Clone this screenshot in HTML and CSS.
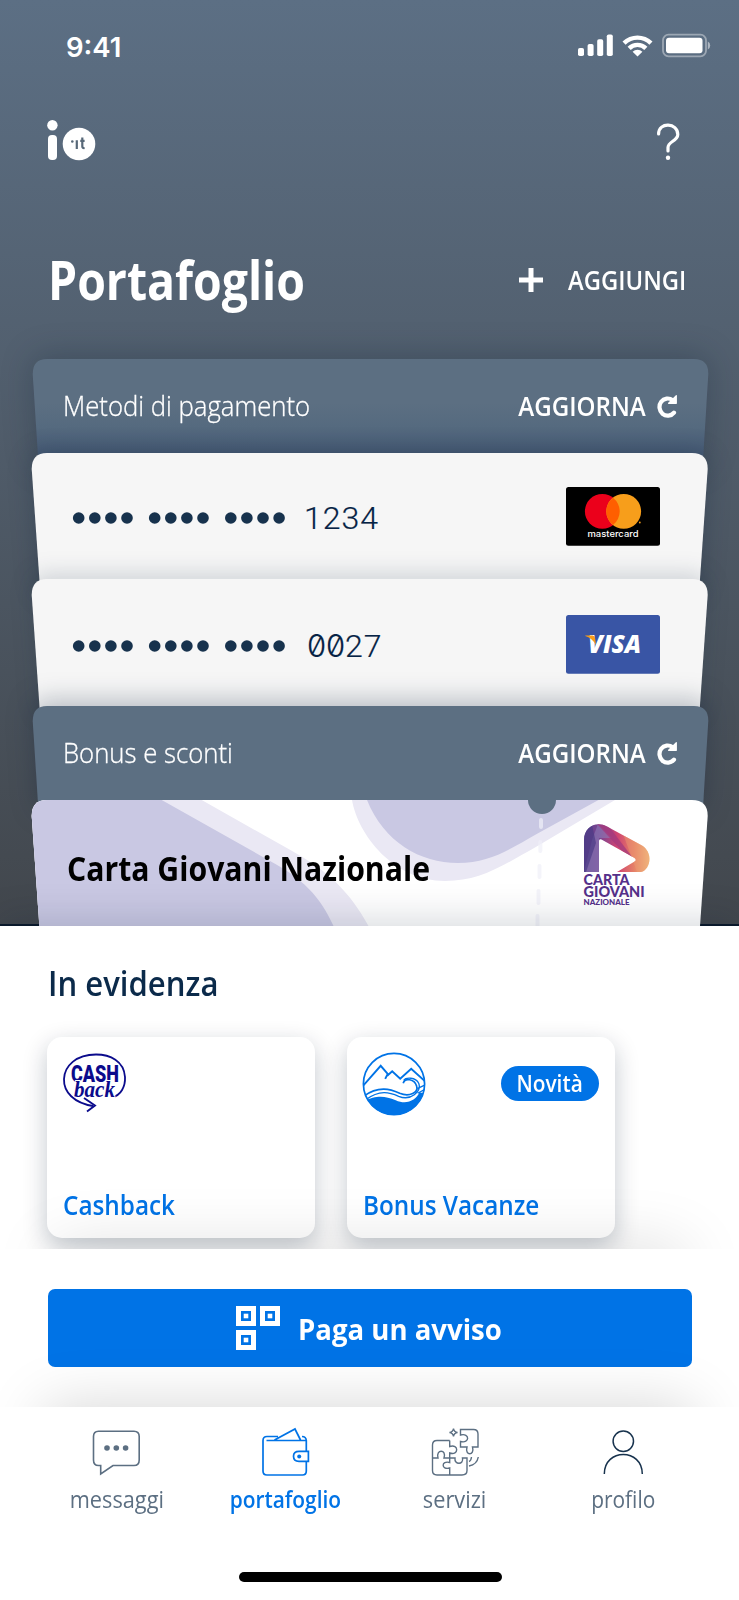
FILE: index.html
```html
<!DOCTYPE html>
<html lang="it">
<head>
<meta charset="utf-8">
<title>Portafoglio</title>
<link rel="stylesheet" href="styles.css">
</head>
<body>
<main class="screen">
  <section class="hero">
    <div class="status">
      <span class="clock">9:41</span>
      <svg class="status-icons" width="134" height="26" viewBox="577 33 134 26" fill="#fff">
        <rect x="578" y="48" width="6" height="8" rx="1.8"/><rect x="587.6" y="44" width="6" height="12" rx="1.8"/>
        <rect x="597.2" y="39.3" width="6" height="16.7" rx="1.8"/><rect x="606.8" y="34.5" width="6" height="21.5" rx="1.8"/>
        <path d="M622.5 41.5A21.5 21.5 0 0 1 652.5 41.5L649.4 44.7A17 17 0 0 0 625.6 44.7ZM627.6 46.7A14.2 14.2 0 0 1 647.4 46.7L644.3 49.9A9.7 9.7 0 0 0 630.7 49.9ZM632.6 51.8A7 7 0 0 1 642.4 51.8L637.5 56.5Z"/>
        <rect x="663" y="34.7" width="43" height="21.6" rx="5.5" fill="none" stroke="#fff" stroke-opacity=".4" stroke-width="1.8"/>
        <rect x="666" y="37.8" width="36.5" height="15.5" rx="3"/>
        <path d="M707.8 41.5q2.4 1.2 2.4 4t-2.4 4z" opacity=".5"/>
      </svg>
    </div>
    <div class="appbar">
      <svg width="50" height="42" viewBox="47 119 50 42" aria-label="io">
        <circle cx="52.4" cy="125.3" r="5.2" fill="#fff"/><rect x="48" y="135" width="9" height="25" rx="4" fill="#fff"/>
        <circle cx="79" cy="144" r="16.3" fill="#fff"/>
        <g fill="none" stroke="#576878" stroke-width="2.2"><path d="M76.8 140.2V149M82.3 137.5V146.5Q82.3 148.3 84.6 148M80.3 140.9H84.6"/></g>
        <circle cx="72.3" cy="141.5" r="1.3" fill="#576878"/>
      </svg>
      <svg width="24" height="38" viewBox="656 123 24 38" fill="none" stroke="#fff" stroke-width="3.2" stroke-linecap="round">
        <path d="M658.6 134C658.6 121.5 677.8 122.5 677.8 134.5C677.8 141 668 141.5 668 147.5V151"/><circle cx="668" cy="157.7" r="2.2" fill="#fff" stroke="none"/>
      </svg>
    </div>
    <div class="titlebar">
      <h1>Portafoglio</h1>
      <div class="add">
        <svg width="24" height="24" viewBox="0 0 24 24" stroke="#fff" stroke-width="5"><path d="M12 0V24M0 12H24"/></svg>
        <span class="action add-label">AGGIUNGI</span>
      </div>
    </div>
    <div class="stack">
      <div class="card header">
        <svg class="shape" width="739" height="110" viewBox="0 0 739 110"><linearGradient id="hg" x1="0" x2="0" y1="0" y2="110" gradientUnits="userSpaceOnUse"><stop offset=".4" stop-color="#5c6f82"/><stop offset=".62" stop-color="#556a7f"/><stop offset=".85" stop-color="#475b75"/></linearGradient><path d="M32.7 15Q32.7 0 47 0H694Q708.5 0 708.3 15L702.5 110H38.8Z" fill="url(#hg)"/></svg>
        <div class="row"><span class="group">Metodi di pagamento</span>
          <span class="refresh"><span class="action upd">AGGIORNA</span>
          <svg width="20" height="24" viewBox="0 0 20 24" fill="none" stroke="#fff" stroke-width="4.2" stroke-linecap="round"><path d="M17 18.6A8.2 8.6 0 1 1 15.6 6.2"/><path d="M11.6 9.3H19.3V1.6L16 5Z" fill="#fff" stroke-width="1.2" stroke-linejoin="round"/></svg></span>
        </div>
      </div>
      <div class="card pay pay-a">
        <svg class="shape" width="739" height="142" viewBox="0 0 739 142"><path d="M31.7 16Q31.7 0 47 0H692Q707.8 0 707.7 16L698.9 142H40.5Z" fill="#f6f6f6"/></svg>
        <div class="row">
          <div class="number"><svg width="214" height="14" viewBox="72 0 214 14" fill="#17324d"><g id="dots"><circle cx="78.7" cy="7" r="5.8"/><circle cx="94.8" cy="7" r="5.8"/><circle cx="110.9" cy="7" r="5.8"/><circle cx="127" cy="7" r="5.8"/></g><use href="#dots" x="76"/><use href="#dots" x="152.1"/></svg><span class="digits">1234</span></div>
          <svg width="94" height="59" viewBox="566 487 94 59"><rect x="566" y="487" width="94" height="58.7" rx="2.5"/><circle cx="602.3" cy="511.4" r="17.4" fill="#eb001b"/><circle cx="623.7" cy="511.4" r="17.4" fill="#f79e1b"/><path d="M613 497.7A17.4 17.4 0 0 1 613 525.1A17.4 17.4 0 0 1 613 497.7" fill="#ff5f00"/><circle cx="639.8" cy="522.5" r=".9" fill="#f79e1b"/><text x="587.5" y="537" textLength="51" lengthAdjust="spacingAndGlyphs" font-family="Inter" font-weight="500" font-size="8.8" fill="#fff">mastercard</text></svg>
        </div>
      </div>
      <div class="card pay pay-b">
        <svg class="shape" width="739" height="142" viewBox="0 0 739 142"><path d="M31.7 16Q31.7 0 47 0H692Q707.8 0 707.7 16L698.9 142H40.5Z" fill="#f6f6f6"/></svg>
        <div class="row">
          <div class="number"><svg width="214" height="14" viewBox="72 0 214 14" fill="#17324d"><use href="#dots"/><use href="#dots" x="76"/><use href="#dots" x="152.1"/></svg><span class="digits second"><span class="zero">00</span>27</span></div>
          <svg width="94" height="59" viewBox="566 615 94 59"><rect x="566" y="615" width="94" height="58.7" rx="2.5" fill="#3955a5"/><text x="588" y="653" textLength="53" lengthAdjust="spacingAndGlyphs" font-family="Open Sans" font-weight="800" font-style="italic" font-size="24.5" fill="#fff">VISA</text><path d="M585.3 635.5H592.5Q594.5 635.5 595 638L596 645Q592 638 585.3 636Z" fill="#f79e1b"/></svg>
        </div>
      </div>
      <div class="card header second-h">
        <svg class="shape" width="739" height="110" viewBox="0 0 739 110"><path d="M32.7 15Q32.7 0 47 0H694Q708.5 0 708.3 15L702.5 110H38.8Z" fill="#5c6f82"/></svg>
        <div class="row"><span class="group">Bonus e sconti</span>
          <span class="refresh"><span class="action upd">AGGIORNA</span>
          <svg width="20" height="24" viewBox="0 0 20 24" fill="none" stroke="#fff" stroke-width="4.2" stroke-linecap="round"><path d="M17 18.6A8.2 8.6 0 1 1 15.6 6.2"/><path d="M11.6 9.3H19.3V1.6L16 5Z" fill="#fff" stroke-width="1.2" stroke-linejoin="round"/></svg></span>
        </div>
      </div>
      <div class="card cgn">
        <svg class="shape" width="739" height="142" viewBox="0 0 739 142">
          <clipPath id="c"><path d="M31.7 16Q31.7 0 47 0H692Q707.8 0 707.7 16L698.9 142H40.5Z"/></clipPath>
          <g clip-path="url(#c)"><rect width="739" height="142" fill="#fff"/>
          <path d="M0 0H201.7L293 51.5C328 71 350 92 368.5 126V142H0Z" fill="#eae8f4"/>
          <path d="M0 0H161.7L270 61C302 78 320 96 333.5 126V142H0Z" fill="#c9c8e3"/>
          <path d="M352 0C358 35 394 81 445 81C480 81 500 67 536.7 46.5L615 0Z" fill="#eae8f4"/>
          <path d="M367 0C384 42 420 63 458 63C490 63 510 49 536.7 34L598.5 0Z" fill="#c9c8e3"/>
          <circle cx="542" r="14" fill="#5c6f82"/>
          <path d="M541 20V27M540.3 42V51M539.5 66V77M538.5 91V103M537.5 116V130" stroke="#efeff8" stroke-opacity=".7" stroke-width="4" stroke-linecap="round"/></g>
        </svg>
        <div class="row"><h2 class="cgn-title">Carta Giovani Nazionale</h2>
          <svg width="68" height="84" viewBox="583 823 68 84">
            <defs><linearGradient id="lg" x1="0" x2="1"><stop offset="0" stop-color="#5b4189"/><stop offset=".25" stop-color="#7a4592"/><stop offset=".5" stop-color="#cf4372"/><stop offset=".75" stop-color="#e58067"/><stop offset="1" stop-color="#f3cd87"/></linearGradient>
            <clipPath id="lc"><path d="M584 872V840C584 827 596 820.5 607 826.5L642 845.5C654 853 650 870 641 872H617L634.5 861.5Q637 860 634.5 858L601.5 839.5Q599 838.5 599 841V872Z"/></clipPath></defs>
            <g clip-path="url(#lc)"><rect x="583" y="823" width="68" height="50" fill="url(#lg)"/><path d="M584 872L592 840L598 824L612 838L599 838V872Z" fill="#8d80ba" opacity=".55"/><path d="M597 824L622 851L633 858L607 824Z" fill="#a33a7d" opacity=".75"/><path d="M622 831L637 872H650V840Z" fill="#ee9b70" opacity=".45"/><path d="M584 830L592 825L596 843L586 872H584Z" fill="#4c3a86" opacity=".7"/></g>
            <g font-family="Lato" font-weight="900" fill="#55308a"><text x="583.6" y="884.6" font-size="14.6" textLength="46" lengthAdjust="spacingAndGlyphs">CARTA</text><text x="583.6" y="897.4" font-size="15" textLength="61" lengthAdjust="spacingAndGlyphs">GIOVANI</text><text x="583.6" y="905.1" font-size="7.8" textLength="46" lengthAdjust="spacingAndGlyphs">NAZIONALE</text></g>
          </svg>
        </div>
      </div>
    </div>
  </section>

  <section class="featured">
    <h2 class="feat-title">In evidenza</h2>
    <div class="tiles">
      <article class="tile">
        <svg class="cashback" width="64" height="62" viewBox="62 1052 64 62" fill="none" stroke="#0b0b8c">
          <path d="M112 1097C121 1096 125.5 1086 125 1077C124 1061 110 1054.5 96 1054.5C76 1054.5 64.5 1066 64 1079C63.5 1092 74 1103 93 1106" stroke-width="1.8"/><path d="M84 1098L95 1105.5L87 1111.5" stroke-width="1.9"/>
          <g fill="#0b0b8c" stroke="none"><text x="71" y="1082" textLength="48" lengthAdjust="spacingAndGlyphs" font-family="Roboto" font-weight="900" font-size="23">CASH</text><text x="74" y="1097" textLength="41" lengthAdjust="spacingAndGlyphs" font-family="Liberation Serif" font-weight="700" font-style="italic" font-size="23" stroke="#fff" stroke-width="1.8" paint-order="stroke">back</text></g>
        </svg>
        <h3 class="tile-a">Cashback</h3>
      </article>
      <article class="tile">
        <div class="tile-top">
          <svg width="64" height="64" viewBox="362.3 1051.7 64 64" fill="none" stroke="#0073e6" stroke-width="1.7">
            <clipPath id="vc"><circle cx="394.3" cy="1083.7" r="31"/></clipPath>
            <g clip-path="url(#vc)"><path d="M362 1102C378 1094 385 1096 396 1100C407 1105 416 1100 420 1092L427 1094V1117H362Z" fill="#0073e6" stroke="none"/>
            <path d="M362 1087L381 1065.5L388 1073.5L385.5 1078.5M387.5 1075.5L392.5 1071L400.5 1078.5L411.5 1068.5L427 1082.5" stroke-width="1.9"/>
            <path d="M364 1096C379 1085 391 1089 400 1093C410 1097 419 1092 417 1086C415 1078.5 405 1077 403.5 1083"/><path d="M366 1099.5C380 1089 390 1092 399 1096C411 1101 422 1091 419 1083C416 1076.5 406 1077 404 1080M418 1088L427 1084M418 1093L427 1088" stroke-width="1.3"/></g>
            <circle cx="394.3" cy="1083.7" r="30.6"/>
          </svg>
          <span class="badge"><span class="badge-text">Novità</span></span>
        </div>
        <h3 class="tile-b">Bonus Vacanze</h3>
      </article>
    </div>
  </section>

  <section class="paybar">
    <button class="pay-btn">
      <svg width="44" height="44" viewBox="0 0 44 44" fill="none"><g id="q"><rect x="2.5" y="2.5" width="15" height="15" stroke="#fff" stroke-width="5"/><rect x="7.7" y="7.7" width="4.6" height="4.6" fill="#fff"/></g><use href="#q" x="24"/><use href="#q" y="24"/></svg>
      <span class="pay-label">Paga un avviso</span>
    </button>
  </section>

  <nav class="tabs">
    <div class="tab">
      <svg width="50" height="50" viewBox="92 1427 50 50" fill="none" stroke="#5c6f82" stroke-width="1.6"><path d="M98.5 1431.2H134Q139.2 1431.2 139.2 1436.5V1460Q139.2 1465.5 134 1465.5H113L100.7 1474V1465.5H98.5Q93.5 1465.5 93.5 1460V1436.5Q93.5 1431.2 98.5 1431.2Z"/><g fill="#5c6f82" stroke="none"><circle cx="107" cy="1448" r="2.8"/><circle cx="116.3" cy="1448" r="2.8"/><circle cx="125.6" cy="1448" r="2.8"/></g></svg>
      <span class="t1">messaggi</span>
    </div>
    <div class="tab active">
      <svg width="50" height="50" viewBox="261 1427 50 50" fill="none" stroke="#0073e6" stroke-width="1.7"><path d="M278 1436.5H267Q263 1436.5 263 1440.5V1471Q263 1475 267 1475H302.5Q306.3 1475 306.3 1471V1462M306.3 1451V1440.5Q306 1436.5 302 1436.5M266.5 1440.5H306M274.5 1440L295 1429L300.5 1440M308.4 1451.3H299Q293.5 1451.3 293.5 1456.3T299 1461.4H308.4Z"/><circle cx="299.2" cy="1456.4" r="2" fill="#0073e6" stroke="none"/></svg>
      <span class="t2">portafoglio</span>
    </div>
    <div class="tab">
      <svg width="50" height="50" viewBox="430 1427 50 50" fill="none" stroke="#5c6f82" stroke-width="1.4"><path d="M449.7 1440.5H437Q432.5 1440.5 432.5 1445V1470.5Q432.5 1475 437 1475H462Q467 1475 467 1470.5V1458H462.5C464 1465 454 1465 455 1458H449.7V1462.5C441 1460 441 1470.5 449.7 1468V1475M432.5 1458H438C435.5 1449 447 1449 444 1458H449.7V1453C459 1456 459 1443.5 449.7 1446.5V1440.5"/><path d="M460.5 1429.5H473.5Q478 1429.5 478 1434V1447H472.5C475 1456 464.5 1456 467 1447H460.5V1441.5C470 1444 470 1432.5 460.5 1435ZM453.5 1428.5Q454 1432 457.5 1432.5Q454 1433 453.5 1436.5Q453 1433 449.5 1432.5Q453 1432 453.5 1428.5ZM471.5 1457Q471 1461 469 1461.5M478.3 1457Q477 1464.5 469 1466"/></svg>
      <span class="t3">servizi</span>
    </div>
    <div class="tab">
      <svg width="50" height="50" viewBox="598.5 1427 50 50" fill="none" stroke="#17324d" stroke-width="1.5"><circle cx="622.8" cy="1441.3" r="10.2"/><path d="M603.8 1474C603.8 1448 641.8 1448 641.8 1474"/></svg>
      <span class="t4">profilo</span>
    </div>
    <div class="home"></div>
  </nav>
</main>
</body>
</html>
```
FILE: styles.css
```css
* { box-sizing: border-box; }
body { margin: 0; font-family: "Open Sans", sans-serif; background: #fff; }
h1, h2, h3 { margin: 0; }
svg { display: block; flex: none; }
.screen { width: 739px; height: 1600px; overflow: hidden; }

h1, h2, h3, .group { transform-origin: left center; }
.action { transform-origin: right center; }

.hero { height: 926px; overflow: hidden; background: linear-gradient(#5c6f84, #42474d 924px, #0b1a2c 924.5px); }
.status { height: 92px; display: flex; justify-content: space-between; padding: 0 28px 0 66px; align-items: center; }
.clock { font: 600 27.5px Inter, sans-serif; color: #fff; padding-top: 2px; }
.appbar { height: 100px; display: flex; justify-content: space-between; padding: 27px 59px 0 47px; }
.appbar svg:last-child { margin-top: 4px; }
.status-icons { margin-top: -1px; }
.titlebar { height: 167px; display: flex; justify-content: space-between; align-items: center; padding: 8px 53px 0 48px; color: #fff; }
h1 { font-size: 53.5px; font-weight: 700; line-height: 70px; white-space: nowrap; transform: scaleX(.867); }
.add { display: flex; align-items: center; gap: 9px; }
.action { font-size: 27px; font-weight: 600; color: #fff; line-height: 36px; white-space: nowrap; }
.add-label { transform: scaleX(.88); }
.upd { transform: scaleX(.893); }

.card { display: grid; }
.card > * { grid-area: 1 / 1; min-height: 0; }
.shape { width: 739px; align-self: start; z-index: 0; overflow: visible; }
.header { height: 94px; grid-template-rows: 94px; }
.pay, .cgn { height: 126px; grid-template-rows: 126px; }
.pay-b { height: 127px; grid-template-rows: 127px; }
.row { position: relative; display: flex; justify-content: space-between; align-items: center; padding: 0 79px 0 72px; }
.header .row { padding: 0 62px 0 63px; }
.header .shape { filter: drop-shadow(0 -3px 16px rgba(0, 20, 40, .24)); }
.pay-a .shape { filter: drop-shadow(0 0 12px rgba(0, 22, 48, .24)); }
.pay-b .shape { filter: drop-shadow(0 -6px 11px rgba(0, 26, 51, .15)); }
.second-h .shape { filter: drop-shadow(0 -6px 13px rgba(0, 20, 45, .26)); }
.pay-b .row { padding-top: 3px; }
.group { font-size: 27px; font-weight: 300; color: #fff; white-space: nowrap; transform: scaleX(.952); -webkit-text-stroke: .3px; }
.header .group { margin-top: -1px; }
.refresh { display: flex; align-items: center; gap: 11px; }
.number { display: flex; align-items: center; gap: 18px; padding-top: 3px; }
.digits { font: 300 32px Roboto, sans-serif; letter-spacing: 1px; color: #062345; -webkit-text-stroke: .2px; }
.second { padding-left: 3px; }
.zero { font: 300 31px Inter, sans-serif; font-feature-settings: "zero"; letter-spacing: -.1px; }
.cgn .row { padding: 3px 88px 0 67px; }
.cgn-title { font-size: 34px; color: #000; white-space: nowrap; padding-top: 6px; margin-right: -60px; transform: scaleX(.888); }

.featured { position: relative; height: 323px; background: #fff; padding: 27px 47px 0; box-shadow: 0 -6px 36px rgba(0, 26, 51, .16); }
.feat-title { font-size: 33.5px; font-weight: 600; color: #0b2a4a; line-height: 60px; white-space: nowrap; margin-left: 1px; transform: scaleX(.928); }
.tiles { display: flex; gap: 32px; margin-top: 24px; }
.tile { width: 268px; height: 201px; border-radius: 15px; background: #fff; box-shadow: 0 8px 24px rgba(0, 26, 51, .24); padding: 15px 16px; display: flex; flex-direction: column; justify-content: space-between; }
.cashback { overflow: visible; }
.tile > svg, .tile-top svg { margin: 0 -1px; }
.tile-top { display: flex; justify-content: space-between; align-items: center; }
.badge { background: #0073e6; color: #fff; font-size: 23px; font-weight: 600; width: 98px; height: 35px; line-height: 34px; margin-bottom: 2px; border-radius: 18px; display: flex; justify-content: center; }
.badge-text { transform: scaleX(.905); }
h3 { font-size: 27px; font-weight: 600; line-height: 36px; color: #0073e6; white-space: nowrap; transform: scaleX(.9); }

.paybar { position: relative; height: 158px; background: #fff; padding: 40px 47px 0 47.5px; box-shadow: 0 -55px 64px -55px rgba(0, 0, 0, .15); }
.pay-btn { width: 644px; height: 78px; border: 0; border-radius: 7px; background: #0073e6; color: #fff; font: inherit; display: flex; align-items: center; justify-content: center; gap: 18px; padding: 0 8px 0 6px; }
.pay-label { font-size: 29px; font-weight: 700; white-space: nowrap; transform: scaleX(.95); transform-origin: left center; margin-right: -11px; }

.tabs { position: relative; height: 193px; background: #fff; padding: 20px 31px 0 32px; display: grid; grid-template-columns: repeat(4, 169px); align-content: start; box-shadow: 0 -45px 60px -45px rgba(0, 0, 0, .17); }
.tab { display: flex; flex-direction: column; align-items: center; font-size: 23px; line-height: 34px; color: #5c6f82; gap: 5px; height: 145px; }
.t1, .t3 { transform: scaleX(.945); }
.t2, .t4 { transform: scaleX(.908); }
.active { color: #0073e6; font-weight: 600; }
.home { grid-column: 1 / -1; width: 263px; height: 10px; border-radius: 5px; background: #000; justify-self: center; }
```
